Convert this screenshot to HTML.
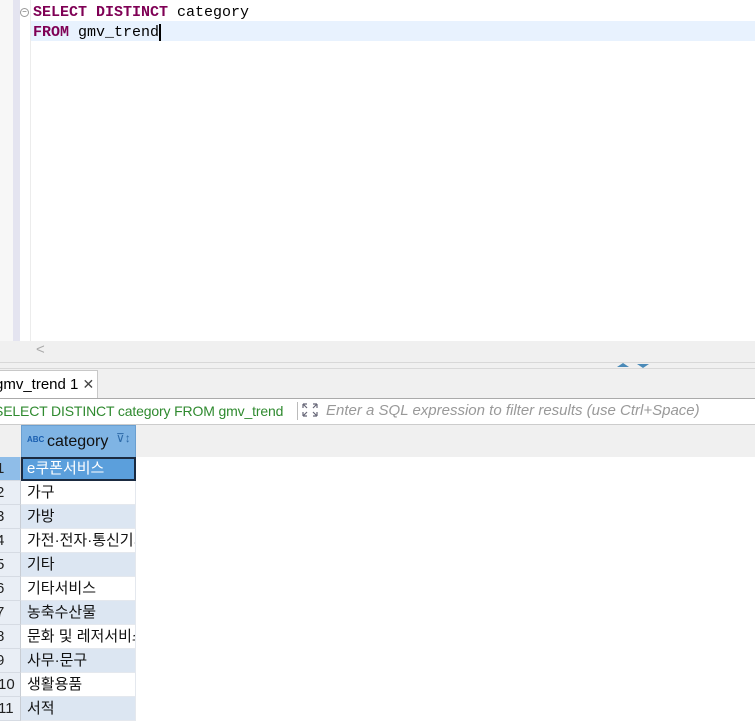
<!DOCTYPE html>
<html><head><meta charset="utf-8"><style>
*{margin:0;padding:0;box-sizing:border-box}
body{width:755px;height:726px;overflow:hidden;background:#f0f0f0;position:relative;font-family:"Liberation Sans","Noto Sans CJK KR",sans-serif}
.a{position:absolute}
.mono{font-family:"Liberation Mono","DejaVu Sans Mono",monospace;font-size:15px}
.kw{color:#7f0055;font-weight:bold}
.row{position:absolute;left:0;width:755px;height:24px;font-size:15px}
.rn{position:absolute;left:0;width:21px;height:24px;background:#e9eef5;border-bottom:1px solid #d6dbe3;border-right:1px solid #c8cdd4;line-height:24px;font-size:15px;color:#222;text-indent:-4px}
.c{position:absolute;left:21px;width:115px;height:24px;line-height:23px;padding-left:6px;border-bottom:1px solid #e4e8ee;border-right:1px solid #e4e8ee;overflow:hidden;white-space:nowrap;color:#111}
.odd .c{background:#dce6f2}
.even .c{background:#fff}
</style></head><body>
<div class="a" style="left:0;top:0;width:755px;height:341px;background:#fff"></div>
<div class="a" style="left:0;top:0;width:13px;height:341px;background:#f7f7f7"></div>
<div class="a" style="left:13px;top:0;width:7px;height:341px;background:#e4e4f0"></div>
<div class="a" style="left:30px;top:0;width:1px;height:341px;background:#ececec"></div>
<div class="a" style="left:31px;top:21px;width:724px;height:20px;background:#e8f2fe"></div>
<div class="a" style="left:20px;top:8px;width:9px;height:9px;border:1px solid #999;border-radius:50%;font-size:8px;line-height:6px;text-align:center;color:#666">−</div>
<div class="a mono" style="left:33px;top:3px;line-height:20px;color:#000"><span class="kw">SELECT DISTINCT</span> category<br><span class="kw">FROM</span> gmv_trend<span style="border-left:2px solid #000;margin-left:0"></span></div>
<div class="a" style="left:32px;top:341px;width:723px;height:21px;background:#f0f0f0"></div>
<div class="a" style="left:36px;top:341px;font-size:15px;color:#aaa">&lt;</div>
<div class="a" style="left:0;top:362px;width:755px;height:1px;background:#d8d8d8"></div>
<div class="a" style="left:0;top:368px;width:755px;height:1px;background:#d8d8d8"></div>
<div class="a" style="left:617px;top:363px;width:0;height:0;border-left:6px solid transparent;border-right:6px solid transparent;border-bottom:4px solid #4a8ab8"></div>
<div class="a" style="left:637px;top:364px;width:0;height:0;border-left:6px solid transparent;border-right:6px solid transparent;border-top:4px solid #4a8ab8"></div>
<div class="a" style="left:0;top:370px;width:98px;height:29px;background:#fff;border:1px solid #c8c8c8;border-left:none;border-bottom:none;font-size:15px;line-height:27px;padding-left:0;text-indent:-5px">gmv_trend 1 <span style="font-size:14px;color:#444">✕</span></div>
<div class="a" style="left:0;top:398px;width:755px;height:27px;background:#fff;border-top:1px solid #aaa;border-bottom:1px solid #ccc"></div>
<div class="a" style="left:-6px;top:403px;font-size:14px;letter-spacing:-0.15px;color:#2f8a2f;white-space:nowrap">SELECT DISTINCT category FROM gmv_trend</div>
<div class="a" style="left:297px;top:402px;width:1px;height:18px;background:#bbb"></div>
<svg class="a" style="left:302px;top:403px" width="16" height="14" viewBox="0 0 16 14" fill="none" stroke="#667" stroke-width="1.2"><path d="M1 1h4M1 1v4M1 1l4 4M15 1h-4M15 1v4M15 1l-4 4M1 13h4M1 13v-4M1 13l4-4M15 13h-4M15 13v-4M15 13l-4-4"/></svg>
<div class="a" style="left:326px;top:402px;font-size:15px;color:#999;font-style:italic;white-space:nowrap">Enter a SQL expression to filter results (use Ctrl+Space)</div>
<div class="a" style="left:0;top:425px;width:755px;height:32px;background:#f0f0f0"></div>
<div class="a" style="left:21px;top:425px;width:115px;height:33px;background:#7fb4e4;border:1px solid #6a9fd0"></div>
<div class="a" style="left:27px;top:435px;font-size:8px;color:#1a5fb0;font-weight:bold">ABC</div>
<div class="a" style="left:47px;top:433px;font-size:16px;color:#111">category</div>
<div class="a" style="left:116px;top:431px;font-size:12px;color:#2d6aa8">⊽↕</div>
<div class="a" style="left:0;top:457px;width:755px;height:269px;background:#fff"></div>
<div class="row odd" style="top:457px"><div class="rn" style="background:#8fbde8">1</div><div class="c" style="background:#5b9fdc;color:#fff;border:2px solid #1a2a40;line-height:20px;padding-left:4px">e쿠폰서비스</div></div>
<div class="row even" style="top:481px"><div class="rn">2</div><div class="c">가구</div></div>
<div class="row odd" style="top:505px"><div class="rn">3</div><div class="c">가방</div></div>
<div class="row even" style="top:529px"><div class="rn">4</div><div class="c">가전·전자·통신기기</div></div>
<div class="row odd" style="top:553px"><div class="rn">5</div><div class="c">기타</div></div>
<div class="row even" style="top:577px"><div class="rn">6</div><div class="c">기타서비스</div></div>
<div class="row odd" style="top:601px"><div class="rn">7</div><div class="c">농축수산물</div></div>
<div class="row even" style="top:625px"><div class="rn">8</div><div class="c">문화 및 레저서비스</div></div>
<div class="row odd" style="top:649px"><div class="rn">9</div><div class="c">사무·문구</div></div>
<div class="row even" style="top:673px"><div class="rn" style="text-indent:-2px">10</div><div class="c">생활용품</div></div>
<div class="row odd" style="top:697px"><div class="rn" style="text-indent:-2px">11</div><div class="c">서적</div></div>
</body></html>
